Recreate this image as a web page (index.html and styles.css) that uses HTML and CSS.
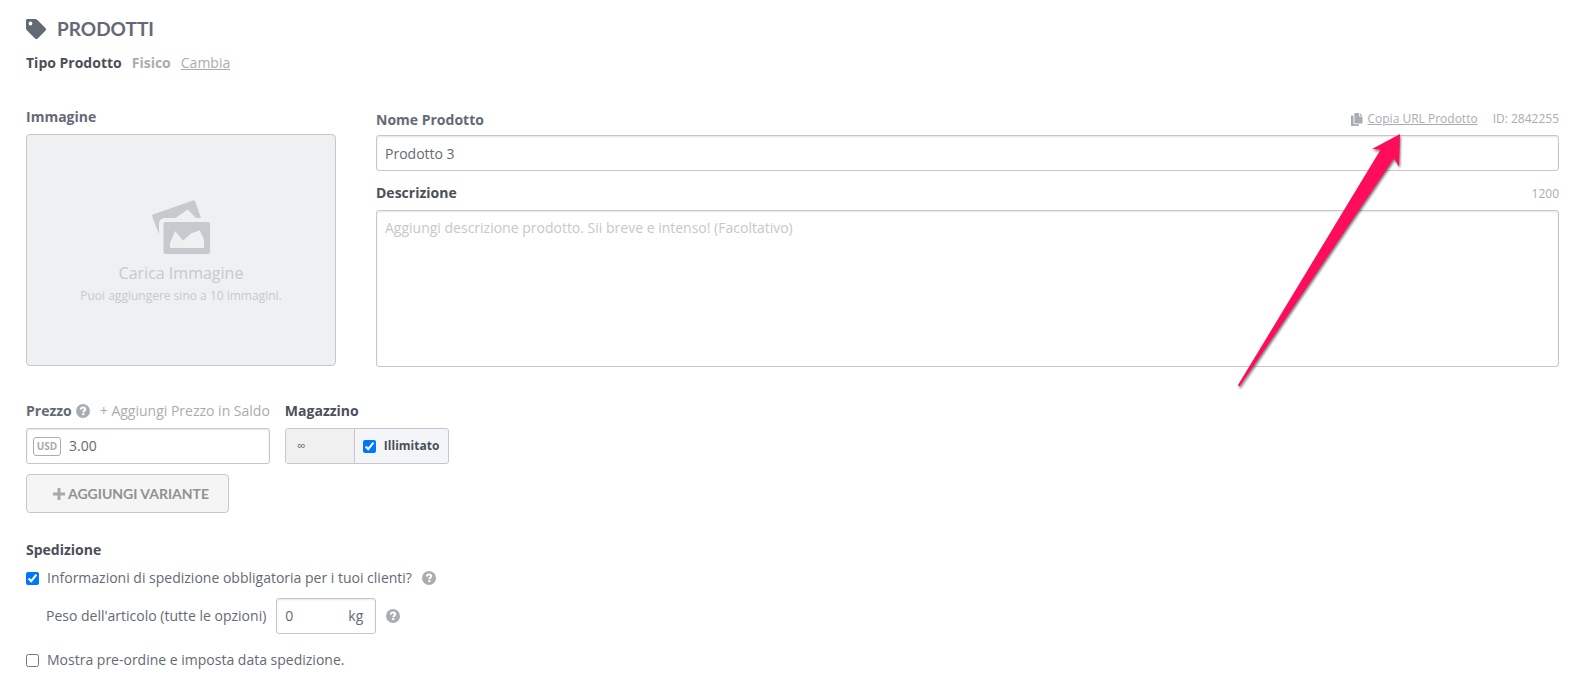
FILE: index.html
```html
<!DOCTYPE html>
<html lang="it">
<head>
    <meta charset="UTF-8">
    <meta name="viewport" content="width=device-width, initial-scale=1.0">
    <title>Prodotti</title>
    <link rel="stylesheet" href="styles.css">
</head>
<body>

    <!-- icone riutilizzate -->
    <svg class="sprite" aria-hidden="true">
        <symbol id="i-help" viewBox="0 0 14 14">
            <circle cx="7" cy="7" r="7" fill="currentColor"/>
            <path d="M4.800 5.500C4.900 4.200 5.800 3.500 7 3.500s2.200.7 2.200 1.800c0 1.400-1.900 1.500-1.900 2.900" fill="none" stroke="#fff" stroke-width="2"/>
            <rect x="6.200" y="9.100" width="2.200" height="2" fill="#fff"/>
        </symbol>
    </svg>

    <main class="page">

        <!-- Titolo -->
        <header class="page-head">
            <svg class="tag" viewBox="0 0 20 20" aria-hidden="true">
                <path fill-rule="evenodd" d="M1.600 0h7.600c.8 0 1.500.3 2 .8l8.200 8.300c.8.8.8 1.800 0 2.600l-7.700 7.700c-.8.8-1.800.8-2.600 0L.8 11.200c-.5-.5-.8-1.200-.8-2V1.600C0 .7.7 0 1.600 0zM4.500 2.600a1.900 1.900 0 1 0 0 3.800 1.900 1.900 0 0 0 0-3.800z"/>
            </svg>
            <h1>Prodotti</h1>
        </header>

        <p class="type">
            <strong>Tipo Prodotto</strong>
            <span class="type-value">Fisico</span>
            <a href="#">Cambia</a>
        </p>

        <!-- Immagine + dati principali -->
        <section class="main-info">
            <div class="image-col">
                <h2 class="label soft">Immagine</h2>
                <button class="upload" type="button">
                    <svg class="photos" viewBox="0 0 58 54" aria-hidden="true">
                        <path d="M1 14.500 41 .4c1-.3 1.900 0 2.200 1L49 18h-5L35.800 9.500 23.500 18H13c-3.500 0-6 2.500-6 6v10L.2 16.500c-.3-.9 0-1.700.8-2z"/>
                        <path fill-rule="evenodd" d="M13.500 22h42.500a2 2 0 0 1 2 2v28a2 2 0 0 1-2 2H13.500a2 2 0 0 1-2-2V24a2 2 0 0 1 2-2zM18 48h34v-8.500l-4.200-9.300-8.800 3.300-8 7-7.800-9.500L18 43z"/>
                    </svg>
                    <span class="upload-title">Carica Immagine</span>
                    <span class="upload-note">Puoi aggiungere sino a 10 immagini.</span>
                </button>
            </div>

            <div class="fields-col">
                <div class="field-head name-head">
                    <label class="label soft" for="nome">Nome Prodotto</label>
                    <div class="meta">
                        <svg class="copy" viewBox="0 0 12 13" aria-hidden="true">
                            <path d="M0 2.500h2.500V10c0 .7.500 1.200 1.200 1.200H8V12c0 .6-.4 1-1 1H1c-.6 0-1-.4-1-1z"/>
                            <path d="M4.400 0H8v3.500h3.500v6c0 .6-.4 1-1 1H4.400c-.6 0-1-.4-1-1V1c0-.6.4-1 1-1zM8.800 0l2.700 2.700H8.800z"/>
                        </svg>
                        <a href="#">Copia URL Prodotto</a>
                        <span class="product-id">ID: 2842255</span>
                    </div>
                </div>
                <input class="input" type="text" id="nome" value="Prodotto 3">

                <div class="field-head desc-head">
                    <label class="label" for="descrizione">Descrizione</label>
                    <span class="meta">1200</span>
                </div>
                <textarea class="input" id="descrizione" placeholder="Aggiungi descrizione prodotto. Sii breve e intenso! (Facoltativo)"></textarea>
            </div>
        </section>

        <!-- Prezzo e magazzino -->
        <section class="pricing">
            <div class="price">
                <div class="price-head">
                    <label class="label soft" for="prezzo">Prezzo</label>
                    <svg class="help" role="img" aria-label="Aiuto"><use href="#i-help"/></svg>
                    <button class="link-btn" type="button">+ Aggiungi Prezzo in Saldo</button>
                </div>
                <div class="input price-box">
                    <span class="currency">USD</span>
                    <input type="text" id="prezzo" value="3.00">
                </div>
            </div>
            <div class="stock">
                <label class="label" for="magazzino">Magazzino</label>
                <div class="stock-box">
                    <input type="text" id="magazzino" value="∞" disabled>
                    <label class="unlimited"><input type="checkbox" checked>Illimitato</label>
                </div>
            </div>
        </section>

        <button class="variant" type="button">
            <svg viewBox="0 0 12 12" aria-hidden="true"><path d="M4.500 0h3v4.500H12v3H7.500V12h-3V7.500H0v-3h4.500z"/></svg>
            Aggiungi variante
        </button>

        <!-- Spedizione -->
        <section class="shipping">
            <h2 class="label">Spedizione</h2>
            <div class="check-row">
                <input type="checkbox" id="info" checked>
                <label for="info">Informazioni di spedizione obbligatoria per i tuoi clienti?</label>
                <svg class="help" role="img" aria-label="Aiuto"><use href="#i-help"/></svg>
            </div>
            <div class="weight-row">
                <label for="peso">Peso dell'articolo (tutte le opzioni)</label>
                <div class="input weight-box">
                    <input type="text" id="peso" value="0">
                    <span>kg</span>
                </div>
                <svg class="help" role="img" aria-label="Aiuto"><use href="#i-help"/></svg>
            </div>
            <div class="check-row">
                <input type="checkbox" id="preordine">
                <label for="preordine">Mostra pre-ordine e imposta data spedizione.</label>
            </div>
        </section>

        <!-- freccia sopra la pagina -->
        <svg class="arrow" viewBox="0 0 162 252" aria-hidden="true">
            <path d="M162 0 134 15l8.500.8L0 251q.5 1.800 2 1L156 24.500l5 8z"/>
        </svg>
    </main>

</body>
</html>
```
FILE: styles.css
```css
* {
    box-sizing: border-box;
}

body {
    margin: 0;
    background: #fff;
    color: #646a75;
    font-family: "Open Sans", sans-serif;
    font-size: 14px;
    line-height: 20px;
}

h1, h2, p {
    margin: 0;
}

input, textarea, button {
    font: inherit;
    color: inherit;
}

input[type="checkbox"] {
    width: 13px;
    height: 13px;
    margin: 0;
    flex: none;
    accent-color: #0075ff;
}

.sprite {
    display: none;
}

.page {
    position: relative;
    padding: 16px 22px 16px 26px;
}

/* ---------- TITOLO ---------- */
.page-head {
    display: flex;
    align-items: center;
    gap: 11px;
    height: 26px;
}

.page-head h1 {
    font-family: Lato, sans-serif;
    font-size: 19px;
    font-weight: 700;
    text-transform: uppercase;
}

.tag {
    width: 20px;
    height: 20px;
    fill: #646a75;
}

.type {
    display: flex;
    gap: 10px;
    margin-top: 11px;
    color: #a9adb2;
}

.type strong {
    color: #4b4f58;
}

.type-value {
    font-weight: 700;
}

a {
    color: #a9adb2;
    text-underline-offset: 1px;
}

.label {
    color: #4b4f58;
    font-size: 14px;
    font-weight: 700;
    line-height: 20px;
}

.soft {
    color: #646a75;
}

/* ---------- CAMPI ---------- */
.input {
    display: block;
    width: 100%;
    height: 36px;
    padding: 0 8px;
    background: #fff;
    border: 1px solid #c5c7cd;
    border-radius: 3px;
    box-shadow: inset 0 1px 2px rgba(0, 0, 0, .1);
    outline: none;
}

textarea.input {
    height: 157px;
    padding: 7px 8px;
    resize: none;
}

textarea::placeholder {
    color: #c5c8cc;
}

.help {
    width: 14px;
    height: 14px;
    flex: none;
    color: #a9adb2;
}

/* ---------- IMMAGINE E DATI ---------- */
.main-info {
    display: flex;
    gap: 40px;
    margin-top: 34px;
}

.image-col {
    width: 310px;
    flex: none;
}

.upload {
    display: flex;
    flex-direction: column;
    align-items: center;
    width: 100%;
    height: 232px;
    margin-top: 7px;
    padding: 65px 0 0;
    background: #eff0f2;
    border: 1px solid #c5c7cd;
    border-radius: 4px;
    color: #c6c9ce;
}

.photos {
    width: 58px;
    height: 54px;
    fill: #c6c9ce;
}

.upload-title {
    margin: 7px 0 1px;
    font-size: 16px;
    line-height: 24px;
}

.upload-note {
    font-size: 12px;
}

.fields-col {
    flex: 1;
    min-width: 0;
    padding-top: 3px;
}

.field-head {
    display: flex;
    justify-content: space-between;
}

.name-head {
    align-items: flex-start;
    margin-bottom: 5px;
}

.desc-head {
    align-items: flex-end;
    margin: 12px 0 7px;
}

.meta {
    display: flex;
    align-items: center;
    font-size: 12px;
    line-height: 18px;
    color: #a9adb2;
}

.copy {
    width: 12px;
    height: 13px;
    margin-right: 4px;
    fill: #a9adb2;
}

.product-id {
    margin-left: 15px;
}

/* ---------- PREZZO ---------- */
.pricing {
    display: flex;
    gap: 15px;
    margin-top: 34px;
}

.price-head {
    display: flex;
    align-items: center;
}

.price-head .help {
    margin: 0 10px 0 4px;
}

.link-btn {
    padding: 0;
    background: none;
    border: 0;
    color: #a9adb2;
}

.price-box {
    display: flex;
    align-items: center;
    margin-top: 7px;
    padding: 0 6px;
}

.price-box input,
.weight-box input {
    min-width: 0;
    padding: 0;
    background: none;
    border: 0;
    outline: none;
}

.price-box input {
    flex: 1;
    width: 0;
}

.currency {
    width: 28px;
    margin-right: 8px;
    border: 1px solid #a9adb2;
    border-radius: 3px;
    color: #a9adb2;
    font-size: 10px;
    font-weight: 700;
    line-height: 17px;
    text-align: center;
}

.stock-box {
    display: flex;
    height: 36px;
    margin-top: 7px;
    background: #f4f5f8;
    border: 1px solid #c5c7cd;
    border-radius: 3px;
}

.stock-box input[type="text"] {
    width: 69px;
    padding: 0 11px;
    background: #f0f0f0;
    border: 0;
    border-right: 1px solid #c5c7cd;
    font-size: 12px;
}

.unlimited {
    display: flex;
    align-items: center;
    gap: 8px;
    padding: 0 9px 0 8px;
    color: #4b4f58;
    font-size: 12px;
    font-weight: 700;
}

.variant {
    display: flex;
    align-items: center;
    gap: 3px;
    height: 39px;
    margin-top: 10px;
    padding: 0 19px 0 26px;
    background: #f5f5f5;
    border: 1px solid #c5c7cd;
    border-radius: 4px;
    color: #919191;
    font-family: Lato, sans-serif;
    font-weight: 700;
    text-transform: uppercase;
}

.variant svg {
    width: 12px;
    height: 12px;
    fill: #a9a9a9;
}

/* ---------- SPEDIZIONE ---------- */
.shipping {
    margin-top: 27px;
}

.check-row {
    display: flex;
    align-items: center;
    gap: 8px;
    margin-top: 8px;
}

.check-row .help {
    margin-left: 2px;
}

.weight-row {
    display: flex;
    align-items: center;
    gap: 10px;
    margin: 10px 0 16px 20px;
}

.weight-box {
    display: flex;
    align-items: center;
    width: 100px;
    padding: 0 12px 0 8px;
}

.weight-box input {
    flex: 1;
    width: 0;
}

/* ---------- FRECCIA ---------- */
.arrow {
    position: absolute;
    top: 134px;
    right: 181px;
    width: 162px;
    height: 252px;
    overflow: visible;
    fill: #ff0d5b;
    filter: drop-shadow(1px 2px 1px rgba(0, 0, 0, .5));
    pointer-events: none;
}
```
